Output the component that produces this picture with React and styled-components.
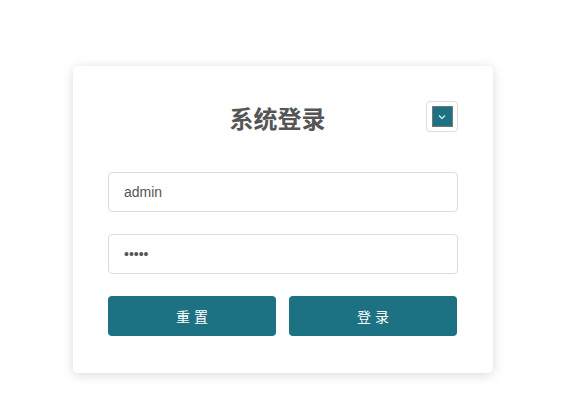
import React, { useState } from "react";
import styled, { createGlobalStyle } from "styled-components";

const GlobalStyle = createGlobalStyle`
	html, body {
		margin: 0;
		padding: 0;
		background: #ffffff;
		font-family: "Liberation Sans", Arial, "Noto Sans CJK SC", sans-serif;
	}
`;

const Page = styled.div`
	display: flex;
	justify-content: center;
	padding: 66px 0 40px 4px;
`;

const Card = styled.div`
	width: 420px;
	box-sizing: border-box;
	padding: 35px 35px 37px;
	background: #fff;
	border-radius: 5px;
	box-shadow: 0 2px 12px rgba(0, 0, 0, 0.15);
`;

const Header = styled.div`
	position: relative;
	height: 31px;
	display: flex;
	align-items: center;
	justify-content: center;
	padding-right: 11px;
	margin-bottom: 40px;
`;

const Title = styled.h2`
	margin: 0;
	font-size: 24px;
	font-weight: bold;
	color: #555;
	font-family: "Noto Sans CJK SC", sans-serif;
	padding-top: 1px;
`;

const Toggle = styled.button`
	position: absolute;
	right: 0;
	top: 0;
	width: 32px;
	height: 31px;
	padding: 0;
	box-sizing: border-box;
	border: 1px solid #ddd;
	border-radius: 4px;
	background: #fff;
	display: flex;
	align-items: center;
	justify-content: center;
	cursor: pointer;
`;

const ToggleFace = styled.span`
	width: 21px;
	height: 21px;
	background: #1c7283;
	border: 1px solid #777;
	box-sizing: border-box;
	display: flex;
	align-items: center;
	justify-content: center;
`;

const Field = styled.input`
	display: block;
	width: 100%;
	height: 40px;
	box-sizing: border-box;
	border: 1px solid #dcdcdc;
	border-radius: 4px;
	padding: 0 15px;
	font-size: 14px;
	color: #555;
	font-family: "Liberation Sans", Arial, sans-serif;
	margin-bottom: ${(p) => p.$gap}px;
	outline: none;
`;

const Actions = styled.div`
	display: grid;
	grid-template-columns: 168px 168px;
	gap: 13px;
`;

const Button = styled.button`
	height: 40px;
	border: none;
	border-radius: 4px;
	background: #1c7283;
	color: #fff;
	font-size: 14px;
	letter-spacing: 4px;
	text-indent: 4px;
	font-family: "Noto Sans CJK SC", sans-serif;
	cursor: pointer;
`;

export default function App() {
	const [user, setUser] = useState("admin");
	const [pass, setPass] = useState("admin");

	return (
		<Page>
			<GlobalStyle />
			<Card>
				<Header>
					<Title>系统登录</Title>
					<Toggle>
						<ToggleFace>
							<svg width="8" height="6" viewBox="0 0 8 6">
								<path d="M1 1.5 L4 4.5 L7 1.5" fill="none" stroke="#cfe3e7" strokeWidth="1.4" />
							</svg>
						</ToggleFace>
					</Toggle>
				</Header>
				<Field $gap={22} value={user} onChange={(e) => setUser(e.target.value)} />
				<Field $gap={22} type="password" value={pass} onChange={(e) => setPass(e.target.value)} />
				<Actions>
					<Button>重置</Button>
					<Button>登录</Button>
				</Actions>
			</Card>
		</Page>
	);
}
